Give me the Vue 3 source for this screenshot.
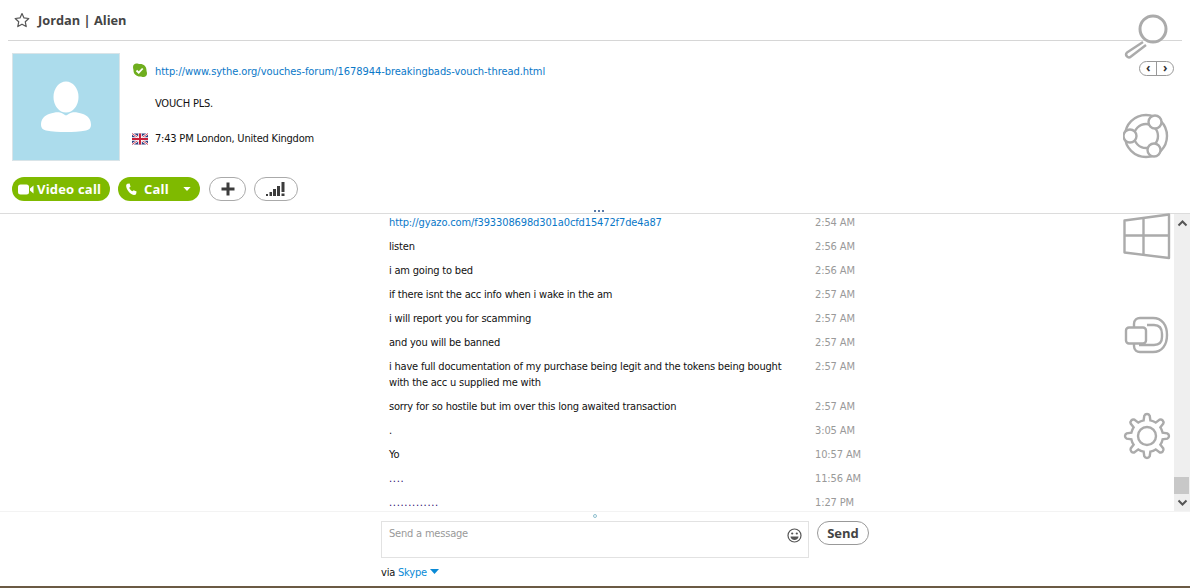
<script setup>
const messages = [
  { text: 'http://gyazo.com/f393308698d301a0cfd15472f7de4a87', time: '2:54 AM', kind: 'link' },
  { text: 'listen', time: '2:56 AM' },
  { text: 'i am going to bed', time: '2:56 AM' },
  { text: 'if there isnt the acc info when i wake in the am', time: '2:57 AM' },
  { text: 'i will report you for scamming', time: '2:57 AM' },
  { text: 'and you will be banned', time: '2:57 AM' },
  { text: 'i have full documentation of my purchase being legit and the tokens being bought with the acc u supplied me with', time: '2:57 AM' },
  { text: 'sorry for so hostile but im over this long awaited transaction', time: '2:57 AM' },
  { text: '.', time: '3:05 AM' },
  { text: 'Yo', time: '10:57 AM' },
  { text: '....', time: '11:56 AM', kind: 'dots' },
  { text: '.............', time: '1:27 PM', kind: 'dots' },
]

function gearPath(cx, cy, rOut, rIn, teeth) {
  const pts = []
  const step = (Math.PI * 2) / teeth
  for (let i = 0; i < teeth; i++) {
    const a = i * step - Math.PI / 2
    const w = step * 0.2
    const p = (r, t) => `${(cx + r * Math.cos(t)).toFixed(1)} ${(cy + r * Math.sin(t)).toFixed(1)}`
    pts.push(`${i === 0 ? 'M' : 'L'}${p(rIn, a - w * 1.35)}`)
    pts.push(`L${p(rOut, a - w * 0.85)}`)
    pts.push(`A3 3 0 0 1 ${p(rOut, a + w * 0.85)}`)
    pts.push(`L${p(rIn, a + w * 1.35)}`)
    pts.push(`A${rIn} ${rIn} 0 0 1 ${p(rIn, a + step - w * 1.35)}`)
  }
  return pts.join(' ') + 'Z'
}
const gear = gearPath(24, 24, 20.5, 16, 8)
</script>

<template>
  <div class="page">
    <header class="head">
      <div class="title-row">
        <svg class="star" width="16" height="16" viewBox="0 0 16 16">
          <path d="M8 1.500l2 4.400 4.800.6-3.500 3.300.9 4.800L8 12.200l-4.200 2.400.9-4.800L1.200 6.500l4.800-.6z" fill="none" stroke="#555" stroke-width="1.200" stroke-linejoin="round" />
        </svg>
        <span class="name">Jordan | Alien</span>
      </div>
      <div class="profile">
        <div class="avatar">
          <svg width="106" height="106" viewBox="0 0 106 106">
            <ellipse cx="53" cy="43" rx="12.500" ry="15.500" fill="#fff" />
            <path d="M28 71c0-6 3-9 8-11 5-1.500 8-2 11-1.500 2 .5 4 2 6 3 2-1 4-2.500 6-3 3-.5 6 0 11 1.500 5 2 8 5 8 11 0 3-2 5-5 5.500-13 2-27 2-40 0-3-.5-5-2.500-5-5.500z" fill="#fff" />
          </svg>
        </div>
        <div class="info">
          <div class="info-row first">
            <svg class="info-icon status" width="16" height="16" viewBox="0 0 16 16">
              <path d="M4.500 .5c1.500 0 2 .5 3.500 .5 4 0 6.500 2.500 6.500 6.500 0 1 .5 1.500.5 3 0 2-1.500 3.500-3.500 3.500-1.500 0-2-.5-3.500-.5-3.500 0-6.500-2.500-6.500-6 0-1-.5-2-.5-3.500C1 2 2.500 .5 4.500 .5z" fill="#6fae1e" />
              <path d="M4.500 7.500l2.200 2.200L10.700 5.500" fill="none" stroke="#fff" stroke-width="1.800" />
            </svg>
            <a class="link">http://www.sythe.org/vouches-forum/1678944-breakingbads-vouch-thread.html</a>
          </div>
          <div class="info-row second">
            <span class="info-icon"></span>
            <span>VOUCH PLS.</span>
          </div>
          <div class="info-row third">
            <svg class="info-icon" width="16" height="16" viewBox="0 0 16 11">
              <rect width="16" height="11" fill="#2f3f80" />
              <path d="M0 0l16 11M16 0L0 11" stroke="#fff" stroke-width="2.200" />
              <path d="M0 0l16 11M16 0L0 11" stroke="#c8203a" stroke-width="0.800" />
              <path d="M8 0v11M0 5.500h16" stroke="#fff" stroke-width="3.600" />
              <path d="M8 0v11M0 5.500h16" stroke="#c8203a" stroke-width="2" />
            </svg>
            <span>7:43 PM London, United Kingdom</span>
          </div>
        </div>
      </div>
      <div class="actions">
        <button class="pill green video">
          <svg width="16" height="11" viewBox="0 0 16 11">
            <rect x="0" y="0.500" width="11" height="10" rx="2.500" fill="#fff" />
            <path d="M12 4.500l3.500-3v8l-3.500-3z" fill="#fff" />
          </svg>
          <span>Video call</span>
        </button>
        <button class="pill green call">
          <svg width="13" height="13" viewBox="0 0 14 14">
            <path d="M2.500 .8L5 .5l1 3.500-1.500 1c.5 1.500 2 3.200 3.500 4l1.300-1.300 3.200 1.500-.5 2.500c-.3 1-1.500 1.500-2.500 1.200C5 11.800 1.800 7.500 1.300 3.500 1.200 2.200 1.500 1.200 2.500 .8z" fill="#fff" />
          </svg>
          <span class="call-label">Call</span>
          <svg class="caret" width="8" height="4" viewBox="0 0 9 5"><path d="M0 0h9L4.500 5z" fill="#fff" /></svg>
        </button>
        <button class="pill ghost plus">
          <svg width="14" height="14" viewBox="0 0 14 14"><path d="M7 .5v13M.5 7h13" stroke="#3c3c3c" stroke-width="3" /></svg>
        </button>
        <button class="pill ghost signal">
          <svg width="20" height="15" viewBox="0 0 20 15" fill="#3c3c3c">
            <rect x="0" y="12" width="2" height="2" />
            <rect x="3.500" y="10" width="2.500" height="4" />
            <rect x="7" y="7" width="3" height="7" />
            <rect x="11" y="4" width="3" height="10" />
            <rect x="15.500" y="0" width="3" height="10" />
            <rect x="15.500" y="11.500" width="3" height="2.500" />
          </svg>
        </button>
      </div>
      <div class="grip"></div>
    </header>

    <main class="body">
      <div class="chat">
        <div v-for="(m, i) in messages" :key="i" class="msg">
          <div class="msg-text" :class="m.kind">{{ m.text }}</div>
          <div class="msg-time">{{ m.time }}</div>
        </div>
      </div>
      <div class="scrollbar">
        <svg class="arrow" width="11" height="7" viewBox="0 0 11 7"><path d="M1.500 5.500l4-4 4 4" fill="none" stroke="#555" stroke-width="2" /></svg>
        <div class="track"><div class="thumb"></div></div>
        <svg class="arrow down" width="11" height="7" viewBox="0 0 11 7"><path d="M1.500 1.500l4 4 4-4" fill="none" stroke="#555" stroke-width="2" /></svg>
      </div>
    </main>

    <footer class="composer">
      <span class="dot"></span>
      <div class="compose-row">
        <div class="input">
          <span class="placeholder">Send a message</span>
          <svg class="smile" width="15" height="15" viewBox="0 0 15 15">
            <circle cx="7.500" cy="7.500" r="6.500" fill="none" stroke="#555" stroke-width="1.200" />
            <circle cx="5.200" cy="5.500" r="1.100" fill="#555" />
            <circle cx="9.800" cy="5.500" r="1.100" fill="#555" />
            <path d="M3.500 8.500h8c0 2-2 3.500-4 3.500s-4-1.500-4-3.500z" fill="#555" />
          </svg>
        </div>
        <button class="send">Send</button>
      </div>
      <div class="via">via <span class="skype">Skype</span>
        <svg width="9" height="5" viewBox="0 0 9 5"><path d="M0 0h9L4.500 5z" fill="#0a8ad6" /></svg>
      </div>
    </footer>
    <div class="strip"></div>

    <div class="rail">
      <svg width="66" height="470" viewBox="0 0 66 470" fill="none" stroke="#ababab" stroke-width="2.400">
        <circle cx="30" cy="29" r="13" stroke-width="3" />
        <path d="M20 42L4 52.500c-2.500 2.500 1 6.500 4 4L23 45" stroke-linejoin="round" />
        <circle cx="23" cy="136" r="21" />
        <circle cx="23" cy="136" r="12" />
        <circle cx="32" cy="122" r="6.500" fill="#fff" />
        <circle cx="7" cy="136" r="6.500" fill="#fff" />
        <circle cx="31" cy="150" r="6.500" fill="#fff" />
        <path d="M1.500 220.500L46 214.500V258L1.500 252.500Z" stroke-linejoin="round" />
        <path d="M20.500 218V255M1.500 235.500H46" />
        <path d="M11 327v-3c0-4 3-6 6-6h13c9 0 14 7 14 17s-5 17-14 17H17c-3 0-6-2-6-6v-2" />
        <path d="M24 325h7c6 0 8 4 8 9v3c0 5-2 8-8 8H16" />
        <rect x="3" y="327.500" width="20" height="16" rx="3" fill="#fff" />
        <g transform="translate(0 412)">
          <path :d="gear" />
          <circle cx="24" cy="24" r="9" />
        </g>
      </svg>
      <div class="pager"><span>‹</span><span>›</span></div>
    </div>
  </div>
</template>

<style scoped>
.page { position: relative; width: 1190px; height: 588px; display: flex; flex-direction: column; overflow: hidden; background: #fff; color: #111; font: 11px/16px "DejaVu Sans Condensed", "DejaVu Sans", sans-serif; letter-spacing: -0.2px; }
.head { position: relative; height: 214px; box-sizing: border-box; border-bottom: 1px solid #dcdcdc; flex: none; }
.title-row { margin: 0 8px; height: 41px; box-sizing: border-box; border-bottom: 1px solid #d6d6d6; display: flex; align-items: center; padding: 0 0 1px 6px; gap: 8px; }
.name { font: 700 12.800px/16px "Open Sans", sans-serif; color: #444; letter-spacing: 0; }
.profile { display: flex; padding: 12px 0 0 12px; gap: 12px; }
.avatar { width: 106px; height: 106px; border: 1px solid #d9e4e8; background: #acdcec; }
.info { padding-top: 11px; }
.info-row { display: flex; align-items: center; gap: 7px; height: 16px; white-space: nowrap; }
.second { margin-top: 16px; }
.third { margin-top: 19px; }
.info-icon { width: 16px; height: 16px; flex: none; }
.status { margin: -2px 0 0 0; }
.link { color: #0a78c8; letter-spacing: -0.05px; }
.actions { display: flex; gap: 8px; padding: 16px 0 0 12px; }
.pill { height: 24px; box-sizing: border-box; border-radius: 12px; border: 0; padding: 0; display: flex; align-items: center; justify-content: center; font: 700 13px/16px "Open Sans", sans-serif; }
.green { background: #7fba00; color: #fff; letter-spacing: .2px; }
.video { width: 98px; justify-content: flex-start; padding-left: 6px; gap: 3px; }
.call { width: 82px; justify-content: flex-start; padding-left: 7px; }
.call-label { margin-left: 6px; }
.caret { margin-left: 14px; }
.ghost { background: #fff; border: 1px solid #aaa; }
.plus { width: 37px; margin-left: 1px; }
.signal { width: 44px; }
.grip { position: absolute; left: 594px; top: 210px; width: 2px; height: 2px; background: #5b7aa8; box-shadow: 4px 0 #5b7aa8, 8px 0 #5b7aa8; }
.body { height: 298px; flex: none; display: flex; border-bottom: 1px solid #f3f3f3; box-sizing: border-box; }
.chat { flex: 1; overflow: hidden; padding: 1px 0 0 389px; box-sizing: border-box; }
.msg { display: flex; padding-bottom: 8px; }
.msg-text { width: 400px; margin-right: 26px; }
.msg-text.link { letter-spacing: -0.12px; }
.msg-time { color: #999; letter-spacing: -0.12px; }
.msg-text.dots { color: #2a0a6e; letter-spacing: .7px; }
.scrollbar { width: 16px; background: #efefef; display: flex; flex-direction: column; align-items: center; }
.arrow { margin-top: 6px; flex: none; }
.arrow.down { margin: 5px 0 5px; }
.track { flex: 1; width: 100%; display: flex; align-items: flex-end; }
.thumb { width: 15px; height: 17px; background: #c8c8c8; }
.composer { position: relative; flex: 1; padding: 9px 0 0 381px; }
.dot { position: absolute; left: 593px; top: 2px; width: 2px; height: 2px; border: 1px solid #8fc0cf; border-radius: 50%; }
.compose-row { display: flex; gap: 8px; align-items: flex-start; }
.input { position: relative; width: 428px; height: 37px; box-sizing: border-box; border: 1px solid #e2e2e2; padding: 4px 7px; }
.placeholder { color: #999; }
.smile { position: absolute; right: 6px; top: 6px; }
.send { width: 52px; height: 24px; background: #fff; border: 1px solid #999; border-radius: 12px; padding: 0; font: 700 13px/16px "Open Sans", sans-serif; color: #444; }
.via { margin-top: 7px; }
.via svg { margin-left: 3px; vertical-align: 2px; }
.skype { color: #0a8ad6; }
.strip { height: 2px; flex: none; background: #6b5a44; }
.rail { position: absolute; left: 1123px; top: 0; width: 66px; height: 470px; pointer-events: none; }
.pager { position: absolute; left: 16px; top: 61px; width: 33px; height: 13px; border: 1px solid #999; border-radius: 8px; background: #fff; display: flex; font: 700 12px/12px "Open Sans", sans-serif; color: #333; }
.pager span { flex: 1; text-align: center; }
.pager span:first-child { border-right: 1px solid #999; }
</style>
